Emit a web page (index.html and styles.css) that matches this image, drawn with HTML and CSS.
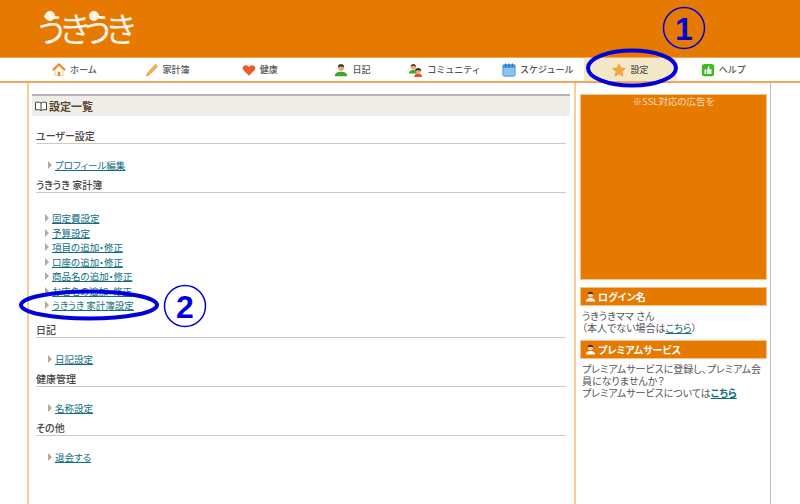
FILE: index.html
```html
<!DOCTYPE html>
<html lang="ja">
<head>
    <meta charset="UTF-8">
    <title>うきうき 設定一覧</title>
    <link rel="stylesheet" href="styles.css">
</head>
<body>
    <div class="header">
        <div class="logo">うきうき<span class="logo-dot first"></span><span class="logo-dot second"></span></div>
    </div>
    <div class="nav">
        <a class="nav-item">
            <svg class="nav-icon" viewBox="0 0 16 16"><path d="M1 8 8 1.500 15 8" fill="none" stroke="#F08020" stroke-width="2"/><path d="M3.500 8 8 4l4.500 4v6.500h-9z" fill="#fff" stroke="#F5C080"/><rect x="6.500" y="10" width="3" height="4.500" fill="#F08020"/></svg>
            ホーム
        </a>
        <a class="nav-item">
            <svg class="nav-icon" viewBox="0 0 16 16"><path d="M12 1.500 14.500 4 5 13.500 1.500 15 3 11z" fill="#F2B04E" stroke="#D98B2B" stroke-width=".6"/></svg>
            家計簿
        </a>
        <a class="nav-item">
            <svg class="nav-icon" viewBox="0 0 16 16"><path d="M8 14.500 1.500 8C-.5 5 2 2.500 4.500 2.500 6 2.500 7.300 3.300 8 4.500 8.700 3.300 10 2.500 11.500 2.500 14 2.500 16.500 5 14.500 8z" fill="#F05A28"/></svg>
            健康
        </a>
        <a class="nav-item">
            <svg class="nav-icon" viewBox="0 0 16 16"><path d="M1 15c0-4 3-5 7-5s7 1 7 5z" fill="#3DA82C"/><circle cx="8" cy="5.500" r="3.500" fill="#E8A868"/><path d="M4.500 5C4.500 2 6 1.500 8 1.500S11.500 2 11.500 5C10 3.500 6 3.500 4.500 5z" fill="#333"/></svg>
            日記
        </a>
        <a class="nav-item">
            <svg class="nav-icon" viewBox="0 0 16 16"><path d="M0 12c0-3 2-4 5-4s5 1 5 4z" fill="#3DA82C"/><circle cx="5" cy="4.500" r="3" fill="#E8A868"/><path d="M2 4C2 2 3.500 1.500 5 1.500S8 2 8 4C6.500 3 3.500 3 2 4z" fill="#333"/><path d="M6 16c0-3 2-4 4.500-4s4.500 1 4.500 4z" fill="#E8502A"/><circle cx="10.500" cy="9" r="3" fill="#E8A868"/><path d="M7 9.500C7 6.500 8.500 5.800 10.500 5.800S14 6.500 14 9.500C13 8 8 8 7 9.500z" fill="#333"/></svg>
            コミュニティ
        </a>
        <a class="nav-item">
            <svg class="nav-icon" viewBox="0 0 16 16"><rect x="1" y="2" width="14" height="13" rx="1.500" fill="#8CC4F0" stroke="#3B93DC"/><rect x="1" y="2" width="14" height="3.500" fill="#3B93DC"/><path d="M4 .5v3M8 .5v3M12 .5v3" stroke="#1F6FB5"/></svg>
            スケジュール
        </a>
        <a class="nav-item active">
            <svg class="nav-icon" viewBox="0 0 16 16"><path d="m8 1 2.200 4.700 5 .6-3.700 3.500 1 5.200L8 12.400 3.500 15l1-5.200L.8 6.300l5-.6z" fill="#F4A93C" stroke="#E88C2C" stroke-width=".6"/></svg>
            設定
        </a>
        <a class="nav-item">
            <svg class="nav-icon" viewBox="0 0 16 16"><rect x="1" y="1" width="14" height="14" rx="3" fill="#3DBB1E"/><path d="M4 7.500h2v5H4zM7 7.500 8.500 3.500h1V7H12v5.500H7z" fill="#fff"/></svg>
            ヘルプ
        </a>
    </div>
    <div class="wrap">
        <div class="main">
            <h2 class="page-title">
                <svg class="book" viewBox="0 0 12 10"><path d="M6 2C4.500 1 2.500 1 .5 1.500v7.500C2.500 8.500 4.500 8.500 6 9.500 7.500 8.500 9.500 8.500 11.500 9V1.500C9.500 1 7.500 1 6 2zM6 2v7.500" fill="#fff" stroke="#444"/></svg>
                設定一覧
            </h2>

            <h3 class="sec-title">ユーザー設定</h3>
            <ul class="links indent">
                <li><a>プロフィール編集</a></li>
            </ul>

            <h3 class="sec-title">うきうき 家計簿</h3>
            <ul class="links wide">
                <li><a>固定費設定</a></li>
                <li><a>予算設定</a></li>
                <li><a>項目の追加・修正</a></li>
                <li><a>口座の追加・修正</a></li>
                <li><a>商品名の追加・修正</a></li>
                <li><a>お店名の追加・修正</a></li>
                <li><a>うきうき 家計簿設定</a></li>
            </ul>

            <h3 class="sec-title">日記</h3>
            <ul class="links indent">
                <li><a>日記設定</a></li>
            </ul>

            <h3 class="sec-title">健康管理</h3>
            <ul class="links indent">
                <li><a>名称設定</a></li>
            </ul>

            <h3 class="sec-title">その他</h3>
            <ul class="links indent">
                <li><a>退会する</a></li>
            </ul>
        </div>
        <div class="side">
            <div class="ad">※SSL対応の広告を</div>
            <h4 class="side-title">
                <svg class="side-icon" viewBox="0 0 12 12"><path d="M1 11.500c0-3 2-4 5-4s5 1 5 4z" fill="#fff"/><circle cx="6" cy="4" r="2.800" fill="#F2C9A0"/><path d="M3 3.800C3 1.500 4.500 1 6 1s3 .5 3 2.800C8 2.800 4 2.800 3 3.800z" fill="#222"/></svg>
                ログイン名
            </h4>
            <p class="side-text">うきうきママ さん<br>（本人でない場合は<a>こちら</a>）</p>
            <h4 class="side-title">
                <svg class="side-icon" viewBox="0 0 12 12"><path d="M1 11.500c0-3 2-4 5-4s5 1 5 4z" fill="#fff"/><circle cx="6" cy="4" r="2.800" fill="#F2C9A0"/><path d="M3 3.800C3 1.500 4.500 1 6 1s3 .5 3 2.800C8 2.800 4 2.800 3 3.800z" fill="#222"/></svg>
                プレミアムサービス
            </h4>
            <p class="side-text">プレミアムサービスに登録し、プレミアム会<br>員になりませんか？<br>プレミアムサービスについては<a class="strong">こちら</a></p>
        </div>
    </div>

    <!-- hand drawn marks on top of the screenshot -->
    <svg class="marks" viewBox="0 0 800 504">
        <ellipse cx="632" cy="68" rx="44" ry="17.500" fill="none" stroke="#0000DC" stroke-width="4"/>
        <circle cx="684" cy="28" r="20.500" fill="none" stroke="#0000DC" stroke-width="1.500"/>
        <text class="mark-num" x="684" y="40">1</text>
        <ellipse cx="89" cy="305" rx="68" ry="13.500" fill="none" stroke="#0000DC" stroke-width="4"/>
        <circle cx="185" cy="306" r="20.500" fill="none" stroke="#0000DC" stroke-width="1.500"/>
        <text class="mark-num" x="185" y="318">2</text>
    </svg>
</body>
</html>
```

FILE: styles.css
```css
body {
    margin: 0;
    height: 504px;
    overflow: hidden;
    position: relative;
    background-color: #fff;
    font-family: "Noto Sans CJK JP", "Noto Sans", sans-serif;
    font-feature-settings: "palt";
    font-size: 10px;
    color: #555;
}
a {
    color: #0E6E7C;
    text-decoration: underline;
}
.header {
    height: 57px;
    background-color: #E67A00;
    padding-left: 37px;
    box-sizing: border-box;
}
.logo {
    position: relative;
    display: inline-block;
    font-size: 34px;
    font-weight: 400;
    line-height: 56px;
    letter-spacing: -5.500px;
    color: #FDF3E6;
}
.logo-dot {
    position: absolute;
    top: 11px;
    width: 10px;
    height: 10px;
    border-radius: 50%;
    background-color: #FDF3E6;
}
.logo-dot.first {
    left: 8px;
}
.logo-dot.second {
    left: 52px;
}
.nav {
    height: 26px;
    box-sizing: border-box;
    border-top: 1px solid #F5A55A;
    border-bottom: 2px solid #F5A55A;
    padding-left: 28px;
    display: flex;
}
.nav-item {
    width: 92.700px;
    display: flex;
    align-items: center;
    justify-content: center;
    gap: 4px;
    font-size: 9px;
    font-weight: 500;
    font-feature-settings: normal;
    color: #555;
    text-decoration: none;
}
.nav-item.active {
    background-color: #F3E8C8;
}
.nav-icon {
    width: 14px;
    height: 14px;
}
.wrap {
    margin-left: 27px;
    width: 744px;
    height: 421px;
    display: flex;
    box-sizing: border-box;
    border-left: 2px solid #FBCB9A;
    border-right: 1px solid #BDBDBD;
}
.main {
    width: 547px;
    box-sizing: border-box;
    padding: 11px 4px 0 3px;
    border-right: 2px solid #FBCB9A;
}
.page-title {
    margin: 0 0 14px;
    height: 22px;
    box-sizing: border-box;
    border-top: 2px solid #B5B5B5;
    background-color: #EEEDE8;
    padding-left: 3px;
    display: flex;
    align-items: center;
    gap: 2px;
    font-size: 11px;
    font-weight: 700;
    color: #5A4630;
}
.book {
    width: 12px;
    height: 10px;
}
.sec-title {
    margin: 0 4px;
    height: 13px;
    line-height: 12px;
    border-bottom: 1px solid #D5C9B8;
    font-size: 10px;
    font-weight: 500;
    color: #444;
}
.links {
    list-style: none;
    margin: 0;
    padding: 14px 0 6.500px 16px;
    font-size: 9.500px;
}
.links.wide {
    padding: 18px 0 11.500px 13px;
}
.links li {
    height: 14.500px;
    line-height: 14.500px;
    display: flex;
    align-items: center;
    gap: 3px;
}
.links li:before {
    content: "";
    border-left: 4px solid #B5A99A;
    border-top: 4px solid transparent;
    border-bottom: 4px solid transparent;
}
.side {
    flex: 1;
    padding: 11px 3px 0 4px;
}
.ad {
    height: 186px;
    box-sizing: border-box;
    border: 1px solid #F5C28A;
    background-color: #E67A00;
    color: #F7DDBE;
    font-size: 9.500px;
    text-align: center;
    line-height: 12px;
}
.side-title {
    margin: 7px 0 0;
    height: 19px;
    box-sizing: border-box;
    border: 1px solid #F5C28A;
    background-color: #E67A00;
    color: #fff;
    font-size: 10px;
    font-weight: 700;
    display: flex;
    align-items: center;
    gap: 2px;
    padding-left: 4px;
}
.side-icon {
    width: 11px;
    height: 11px;
}
.side-text {
    margin: 4px 0 0 2px;
    line-height: 11.700px;
    color: #555;
}
.strong {
    font-weight: 700;
}
.marks {
    position: absolute;
    left: 0;
    top: 0;
    width: 800px;
    height: 504px;
    pointer-events: none;
}
.mark-num {
    font-family: "Liberation Sans", sans-serif;
    font-size: 32px;
    font-weight: 700;
    fill: #0000DC;
    text-anchor: middle;
}
```
